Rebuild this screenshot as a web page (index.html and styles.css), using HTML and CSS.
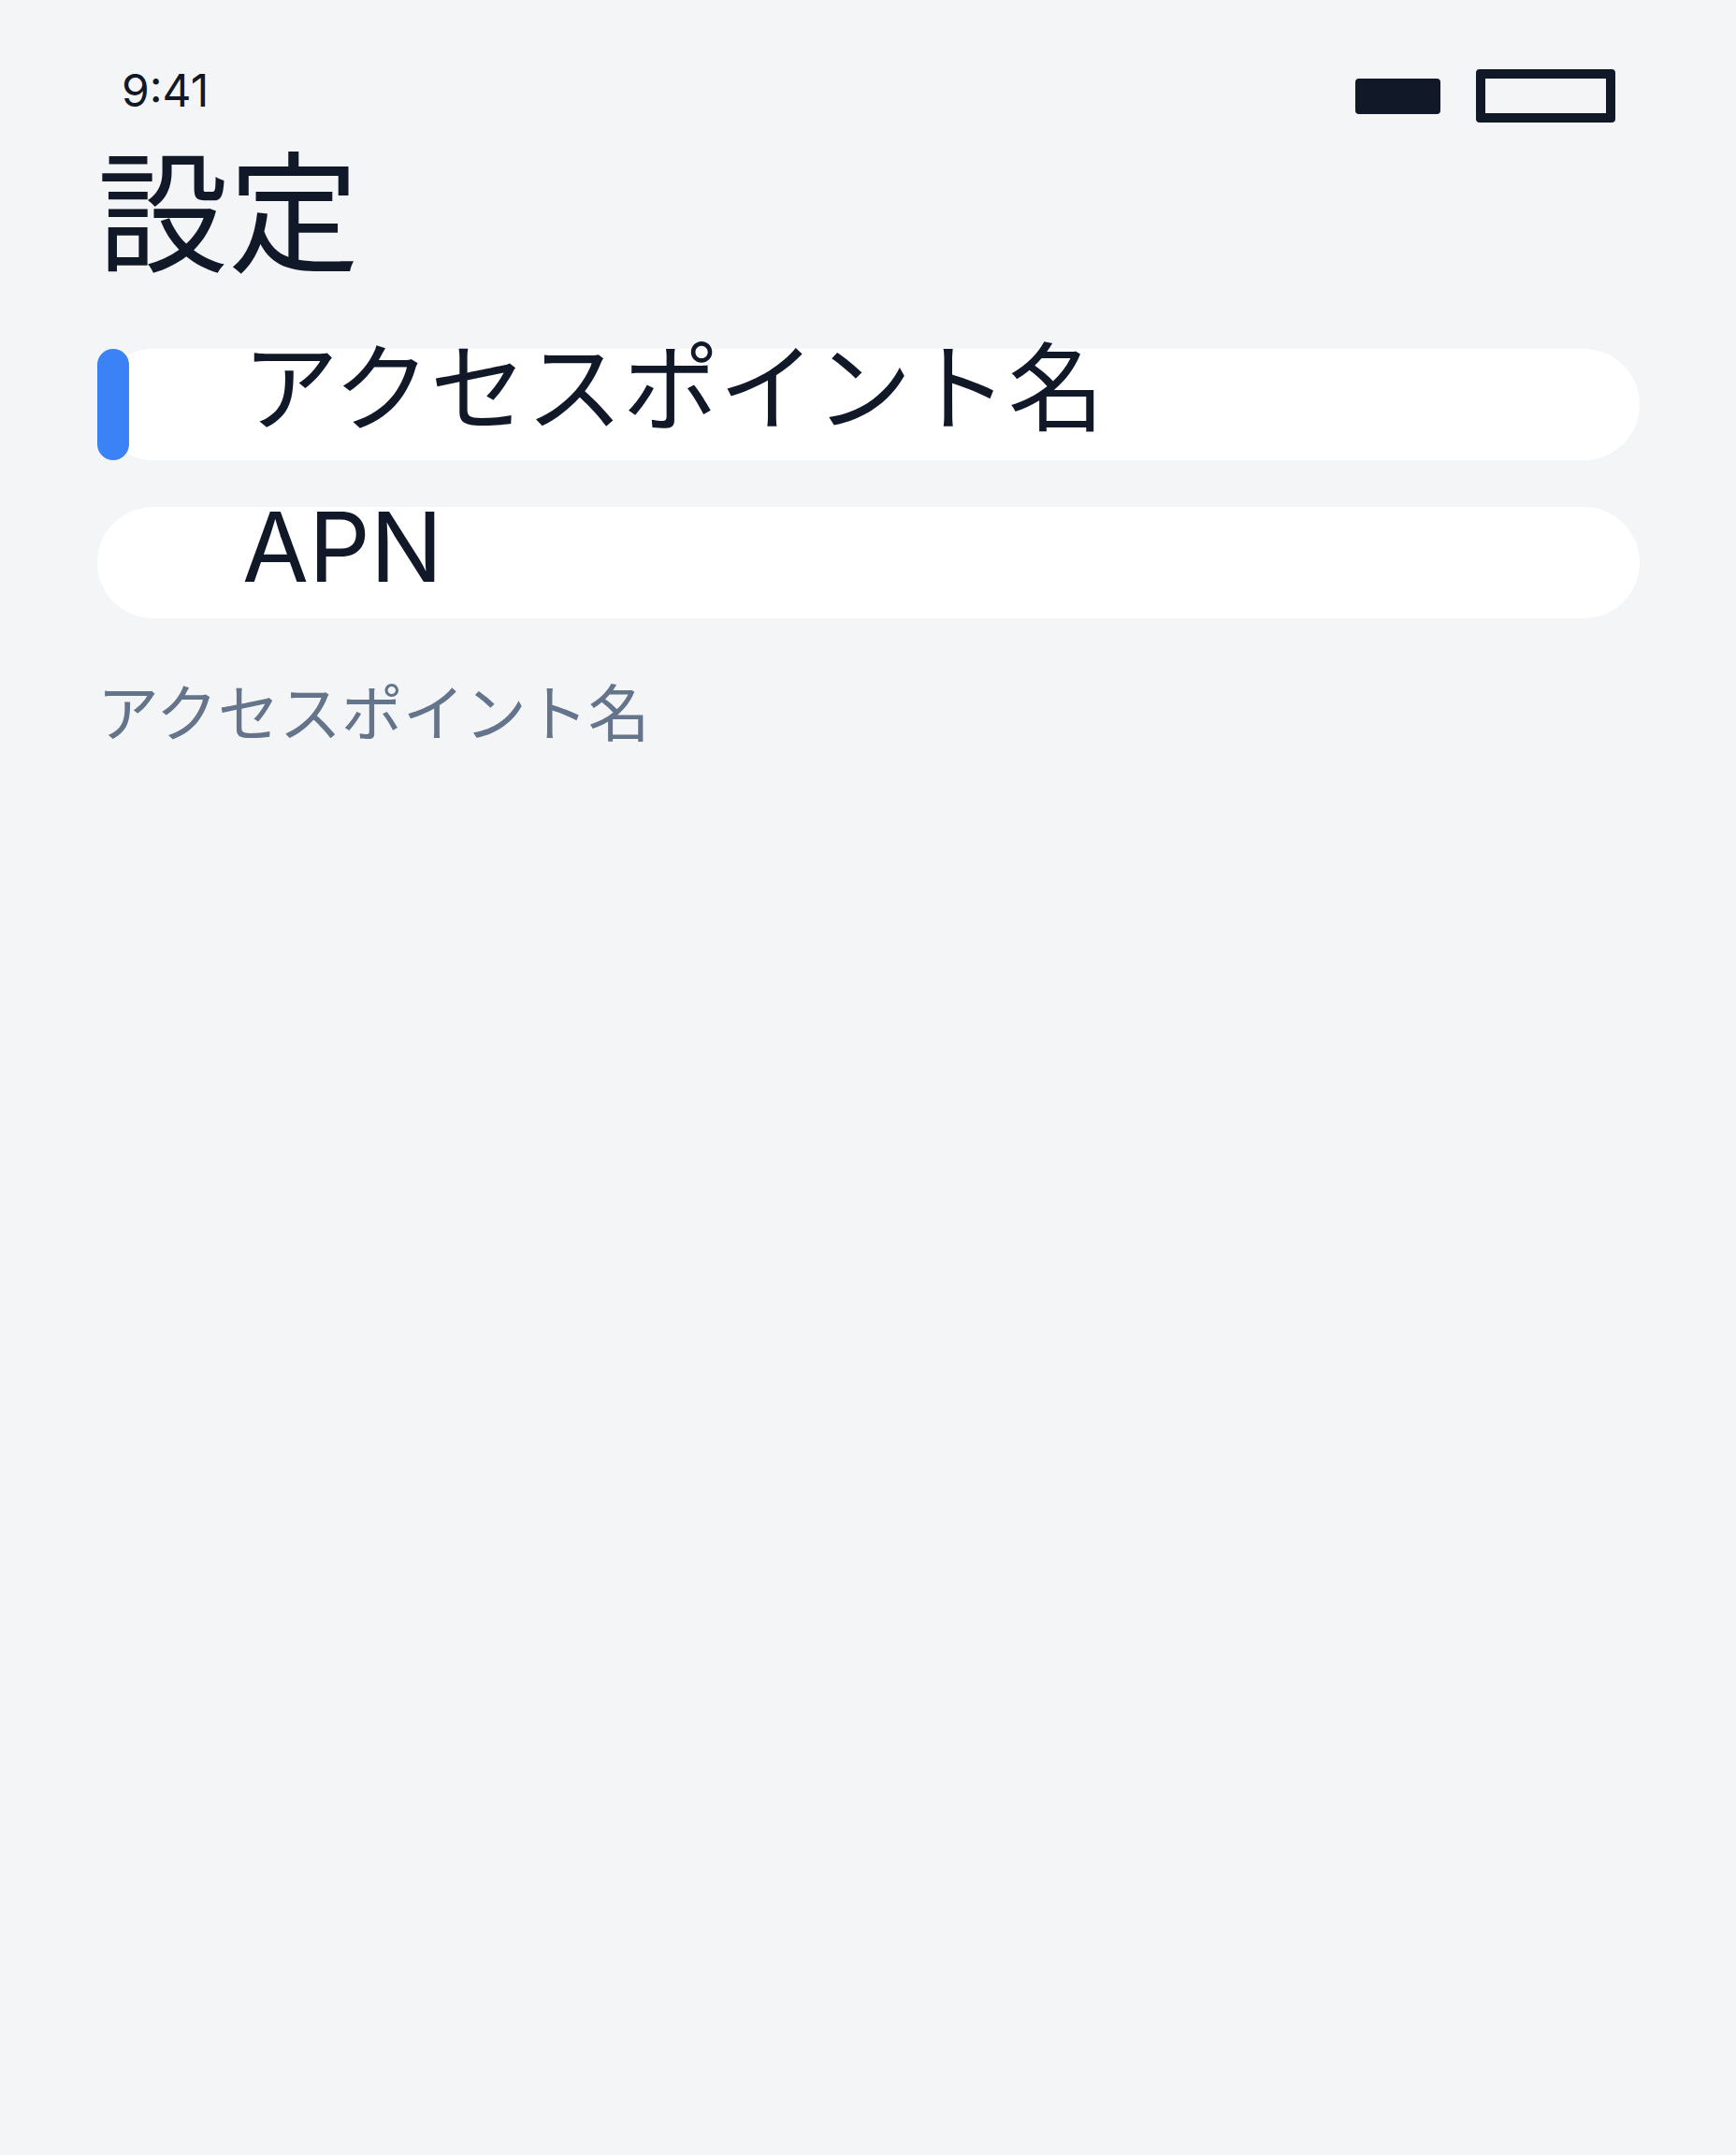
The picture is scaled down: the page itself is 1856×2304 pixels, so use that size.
FILE: index.html
```html
<!DOCTYPE html>
<html lang="ja">
<head>
<meta charset="utf-8">
<title>設定</title>
<link rel="stylesheet" href="styles.css">
</head>
<body>
<div class="screen">
  <div class="status">
    <span class="time">9:41</span>
    <div class="status-icons">
      <span class="signal"></span>
      <span class="battery"></span>
    </div>
  </div>
  <h1 class="title">設定</h1>
  <div class="list">
    <div class="row row-active">
      <span class="indicator"></span>
      <span class="row-text">アクセスポイント名</span>
    </div>
    <div class="row">
      <span class="row-text">APN</span>
    </div>
  </div>
  <p class="label">アクセスポイント名</p>
</div>
</body>
</html>
```
FILE: styles.css
```css
html, body {
  margin: 0;
  padding: 0;
  background: #f4f5f7;
}
body {
  font-family: Inter, "Noto Sans CJK JP", sans-serif;
  font-weight: 400;
  color: #111827;
}
.screen {
  width: 1856px;
  height: 2304px;
  box-sizing: border-box;
  padding: 0 103px 0 104px;
}
.status {
  display: flex;
  justify-content: space-between;
  align-items: center;
  padding: 74px 26px 0 26px;
  height: 57px;
  box-sizing: content-box;
}
.time {
  font-size: 48px;
  line-height: 48px;
  margin-bottom: 11px;
}
.status-icons {
  display: flex;
  align-items: center;
  gap: 38px;
}
.signal {
  display: block;
  width: 91px;
  height: 38px;
  background: #111827;
  border-radius: 4px;
}
.battery {
  display: block;
  width: 149px;
  height: 57px;
  box-sizing: border-box;
  border: 10px solid #111827;
  border-radius: 4px;
}
.title {
  margin: 28px 0 0 0;
  font-size: 140px;
  line-height: 140px;
  font-weight: 400;
}
.list {
  margin-top: 74px;
  display: flex;
  flex-direction: column;
  gap: 50px;
}
.row {
  position: relative;
  height: 119px;
  background: #ffffff;
  border-radius: 60px;
  display: flex;
  align-items: flex-start;
  padding-left: 155px;
}
.indicator {
  position: absolute;
  left: 0;
  top: 0;
  width: 34px;
  height: 119px;
  background: #3b82f6;
  border-radius: 17px;
}
.row-text {
  font-size: 103px;
  line-height: 103px;
  margin-top: -9px;
  white-space: nowrap;
}
.label {
  margin: 69px 0 0 0;
  font-size: 66px;
  line-height: 66px;
  color: #64748b;
}
```
